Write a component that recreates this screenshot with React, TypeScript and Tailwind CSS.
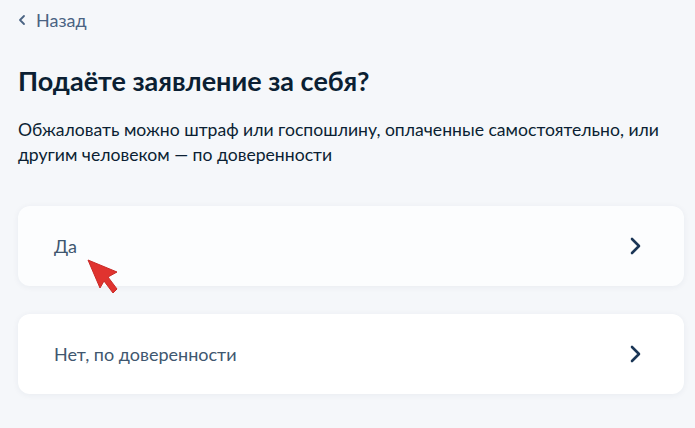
import React from 'react';

const options = ['Да', 'Нет, по доверенности'];

function Chevron() {
  return (
    <svg width="14" height="20" viewBox="0 0 14 20" fill="none">
      <path d="M4 3l7 7-7 7" stroke="#1b3656" strokeWidth="2.6" strokeLinecap="round" strokeLinejoin="round" />
    </svg>
  );
}

export default function App() {
  return (
    <div className="relative min-h-[428px] w-full bg-[#f5f7fa] px-[18px] pt-[9px] text-[#0b1f33]" style={{ fontFamily: 'Lato, "Noto Sans", sans-serif' }}>
      <a className="flex items-center gap-[10px] text-[18px] leading-[22px] text-[#4a6383]">
        <svg width="8" height="12" viewBox="0 0 8 12" fill="none">
          <path d="M6 2L2 6l4 4" stroke="#4a6383" strokeWidth="1.8" strokeLinecap="round" strokeLinejoin="round" />
        </svg>
        Назад
      </a>

      <h1 className="mt-[34px] text-[27px] font-bold leading-[32px] text-[#0b1f33]">Подаёте заявление за себя?</h1>

      <p className="mt-[20px] text-[17.6px] leading-[25px] text-[#0b1f33]">
        Обжаловать можно штраф или госпошлину, оплаченные самостоятельно, или
        <br />
        другим человеком — по доверенности
      </p>

      <div className="mt-[39px] mr-[-7px] flex flex-col gap-[28px]">
        {options.map((o, i) => (
          <div
            key={o}
            className={`flex h-[80px] items-center justify-between rounded-[12px] pl-[36px] pr-[42px] shadow-[0_1px_6px_rgba(30,50,80,0.06)] ${i === 0 ? 'bg-[#fcfdfe]' : 'bg-white'}`}
          >
            <span className="text-[18px] leading-[24px] text-[#40576f]">{o}</span>
            <Chevron />
          </div>
        ))}
      </div>

      <svg className="absolute left-[86px] top-[257px]" width="36" height="38" viewBox="86 257 36 38">
        <path d="M88 260 L117 272 L108 277 L117 289 L113 293 L104 281 L100 288 Z" fill="#e0332f" stroke="#c92a27" strokeWidth="1" strokeLinejoin="round" />
      </svg>
    </div>
  );
}
